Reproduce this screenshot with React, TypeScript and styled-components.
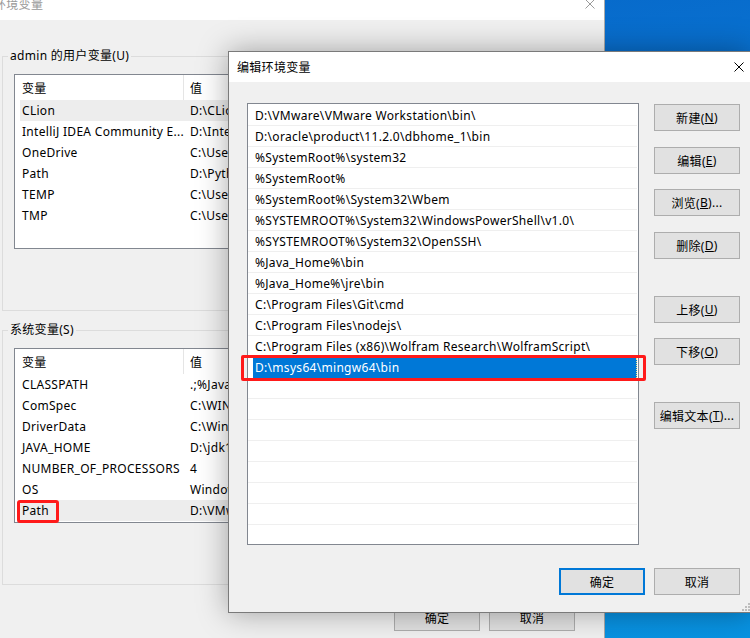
import styled, { createGlobalStyle } from "styled-components";

const GlobalStyle = createGlobalStyle`
  html, body {
    margin: 0;
    padding: 0;
  }
  body {
    font-family: "Noto Sans", "Noto Sans CJK SC", sans-serif;
    font-size: 12px;
    letter-spacing: 0.3px;
    color: #000000;
  }
  * {
    box-sizing: border-box;
  }
`;

const Desktop = styled.div`
  position: relative;
  width: 750px;
  height: 638px;
  overflow: hidden;
  background: linear-gradient(170deg, #0663c6 0%, #0a7ad6 40%, #0893e2 100%);
`;

// windows on the desktop are placed at their screen coordinates
const MainWindow = styled.div`
  position: absolute;
  left: -12px;
  top: -11px;
  width: 617px;
  height: 680px;
  display: flex;
  flex-direction: column;
  background: #f0f0f0;
  border: 1px solid #aaaaaa;
`;

const EditDialog = styled.div`
  position: absolute;
  left: 228px;
  top: 51px;
  width: 524px;
  height: 562px;
  display: flex;
  flex-direction: column;
  background: #f0f0f0;
  border: 1px solid #7a7a7a;
  box-shadow: 0 0 28px rgba(0, 0, 0, 0.34);
`;

const TitleBar = styled.div<{ $inactive?: boolean }>`
  height: 30px;
  flex: none;
  display: flex;
  align-items: center;
  justify-content: space-between;
  padding-left: ${(p) => (p.$inactive ? 5 : 8)}px;
  padding-bottom: ${(p) => (p.$inactive ? 3 : 0)}px;
  background: #ffffff;
  color: ${(p) => (p.$inactive ? "#999999" : "#000000")};
  font-size: 12px;
`;

const CloseBox = styled.div<{ $width: number }>`
  width: ${(p) => p.$width}px;
  height: 30px;
  display: flex;
  align-items: center;
  justify-content: center;
`;

const MainBody = styled.div`
  padding: 28px 13px 0 13px;
  display: flex;
  flex-direction: column;
`;

const GroupBox = styled.fieldset<{ $gap?: number }>`
  margin: ${(p) => p.$gap || 0}px 0 0 0;
  padding: 10px 11px 24px 11px;
  border: 1px solid #dcdcdc;
  min-width: 0;
`;

const Legend = styled.legend`
  padding: 0 2px;
  margin-left: -6px;
  line-height: 16px;
  font-size: 12px;
`;

const VarList = styled.div`
  height: 175px;
  background: #ffffff;
  border: 1px solid #828790;
`;

const ListHeader = styled.div`
  display: grid;
  grid-template-columns: 162px 1fr;
  height: 25px;
  padding-left: 7px;
`;

const HeaderCell = styled.div<{ $sep?: boolean }>`
  display: flex;
  align-items: center;
  padding-left: ${(p) => (p.$sep ? 0 : 6)}px;
  border-right: ${(p) => (p.$sep ? "1px solid #e5e5e5" : "none")};
`;

const VarRow = styled.div<{ $selected?: boolean }>`
  display: grid;
  grid-template-columns: 168px 1fr;
  height: 21px;
  align-items: center;
  margin-left: 5px;
  padding-left: 2px;
  white-space: nowrap;
  background: ${(p) => (p.$selected ? "#ededed" : "transparent")};
`;

const Cell = styled.div`
  position: relative;
  line-height: 21px;
`;

const RedMark = styled.div`
  position: absolute;
  left: -5px;
  top: 0;
  width: 42px;
  height: 23px;
  border: 3px solid #ff1a1a;
  border-radius: 3px;
`;

const HiddenActions = styled.div`
  display: flex;
  justify-content: flex-end;
  gap: 9px;
  margin-top: 10px;
`;

const Button = styled.div<{ $default?: boolean; $gap?: number }>`
  width: 86px;
  height: 27px;
  flex: none;
  margin-top: ${(p) => p.$gap || 0}px;
  display: flex;
  align-items: center;
  justify-content: center;
  background: #e1e1e1;
  border: ${(p) => (p.$default ? "2px solid #0078d7" : "1px solid #adadad")};
  font-size: 12px;
  white-space: nowrap;

  u {
    text-decoration: underline;
    text-underline-offset: 1px;
  }
`;

const FooterRow = styled.div<{ $gap: number; $right: number }>`
  display: flex;
  justify-content: flex-end;
  gap: 9px;
  margin-top: ${(p) => p.$gap}px;
  padding-right: ${(p) => p.$right}px;
`;

const DialogBody = styled.div`
  position: relative;
  flex: 1;
  padding: 21px 11px 17px 18px;
  display: flex;
  flex-direction: column;
`;

const TopArea = styled.div`
  display: flex;
  gap: 15px;
`;

const PathList = styled.div`
  width: 392px;
  height: 442px;
  flex: none;
  padding-top: 1px;
  background: #ffffff;
  border: 1px solid #828790;
`;

const PathRow = styled.div<{ $active?: boolean }>`
  position: relative;
  height: 21px;
  display: flex;
  align-items: center;
  padding-left: ${(p) => (p.$active ? 0 : 7)}px;
  margin-right: 1px;
  border-bottom: 1px solid ${(p) => (p.$active ? "transparent" : "#efefef")};
  white-space: nowrap;
`;

const EditBox = styled.div`
  flex: 1;
  height: 20px;
  margin: 1px 0 0 5px;
  padding-left: 2px;
  display: flex;
  align-items: center;
  background: #0078d7;
  color: #ffffff;
  border-right: 1px dotted #f5e08a;
`;

const RowMark = styled.div`
  position: absolute;
  left: -7px;
  top: -2px;
  width: 405px;
  height: 26px;
  border: 3px solid #ff1a1a;
  border-radius: 2px;
`;

const ButtonColumn = styled.div`
  display: flex;
  flex-direction: column;
`;

const Grip = styled.svg`
  position: absolute;
  right: 1px;
  bottom: 1px;
`;

const CloseIcon = ({ color }: { color: string }) => (
  <svg width="10" height="10" viewBox="0 0 10 10">
    <path d="M0.5 0.5 L9.5 9.5 M9.5 0.5 L0.5 9.5" stroke={color} strokeWidth="1" />
  </svg>
);

const userVars: [string, string][] = [
  ["CLion", "D:\\CLion 2019.3.3\\bin;"],
  ["IntelliJ IDEA Community E...", "D:\\IntelliJ IDEA Community Edition 2019.3.3\\bin;"],
  ["OneDrive", "C:\\Users\\admin\\OneDrive"],
  ["Path", "D:\\Python\\Python37\\Scripts\\;D:\\Python\\Python37\\"],
  ["TEMP", "C:\\Users\\admin\\AppData\\Local\\Temp"],
  ["TMP", "C:\\Users\\admin\\AppData\\Local\\Temp"],
];

const systemVars: [string, string][] = [
  ["CLASSPATH", ".;%Java_Home%\\bin;%Java_Home%\\lib\\dt.jar"],
  ["ComSpec", "C:\\WINDOWS\\system32\\cmd.exe"],
  ["DriverData", "C:\\Windows\\System32\\Drivers\\DriverData"],
  ["JAVA_HOME", "D:\\jdk1.8.0_221"],
  ["NUMBER_OF_PROCESSORS", "4"],
  ["OS", "Windows_NT"],
  ["Path", "D:\\VMware\\VMware Workstation\\bin\\;D:\\oracle"],
];

const paths = [
  "D:\\VMware\\VMware Workstation\\bin\\",
  "D:\\oracle\\product\\11.2.0\\dbhome_1\\bin",
  "%SystemRoot%\\system32",
  "%SystemRoot%",
  "%SystemRoot%\\System32\\Wbem",
  "%SYSTEMROOT%\\System32\\WindowsPowerShell\\v1.0\\",
  "%SYSTEMROOT%\\System32\\OpenSSH\\",
  "%Java_Home%\\bin",
  "%Java_Home%\\jre\\bin",
  "C:\\Program Files\\Git\\cmd",
  "C:\\Program Files\\nodejs\\",
  "C:\\Program Files (x86)\\Wolfram Research\\WolframScript\\",
  "D:\\msys64\\mingw64\\bin",
];

const sideButtons: { label: string; key: string; tail?: string; gap: number }[] = [
  { label: "新建", key: "N", gap: 1 },
  { label: "编辑", key: "E", gap: 16 },
  { label: "浏览", key: "B", tail: "...", gap: 15 },
  { label: "删除", key: "D", gap: 16 },
  { label: "上移", key: "U", gap: 37 },
  { label: "下移", key: "O", gap: 15 },
  { label: "编辑文本", key: "T", tail: "...", gap: 37 },
];

const VariableTable = ({ rows, marked }: { rows: [string, string][]; marked?: number }) => (
  <VarList>
    <ListHeader>
      <HeaderCell $sep>变量</HeaderCell>
      <HeaderCell>值</HeaderCell>
    </ListHeader>
    {rows.map(([name, value], i) => (
      <VarRow key={name + i} $selected={marked !== undefined ? i === marked : i === 0}>
        <Cell>
          {name}
          {i === marked && <RedMark />}
        </Cell>
        <Cell>{value}</Cell>
      </VarRow>
    ))}
  </VarList>
);

export default function App() {
  const rows = Array.from({ length: 20 }, (_, i) => paths[i] ?? "");
  const selected = paths.length - 1;

  return (
    <>
      <GlobalStyle />
      <Desktop>
        <MainWindow>
          <TitleBar $inactive>
            环境变量
            <CloseBox $width={28}>
              <CloseIcon color="#9a9a9a" />
            </CloseBox>
          </TitleBar>
          <MainBody>
            <GroupBox>
              <Legend>admin 的用户变量(U)</Legend>
              <VariableTable rows={userVars} />
              <HiddenActions>
                <Button>新建(<u>N</u>)...</Button>
                <Button>编辑(<u>E</u>)...</Button>
                <Button>删除(<u>D</u>)</Button>
              </HiddenActions>
            </GroupBox>
            <GroupBox $gap={11}>
              <Legend>系统变量(S)</Legend>
              <VariableTable rows={systemVars} marked={6} />
              <HiddenActions>
                <Button>新建(<u>W</u>)...</Button>
                <Button>编辑(<u>I</u>)...</Button>
                <Button>删除(<u>L</u>)</Button>
              </HiddenActions>
            </GroupBox>
            <FooterRow $gap={19} $right={16}>
              <Button>确定</Button>
              <Button>取消</Button>
            </FooterRow>
          </MainBody>
        </MainWindow>

        <EditDialog>
          <TitleBar>
            编辑环境变量
            <CloseBox $width={24}>
              <CloseIcon color="#000000" />
            </CloseBox>
          </TitleBar>
          <DialogBody>
            <TopArea>
              <PathList>
                {rows.map((p, i) =>
                  i === selected ? (
                    <PathRow key={i} $active>
                      <EditBox>{p}</EditBox>
                      <RowMark />
                    </PathRow>
                  ) : (
                    <PathRow key={i}>{p}</PathRow>
                  )
                )}
              </PathList>
              <ButtonColumn>
                {sideButtons.map((b) => (
                  <Button key={b.label} $gap={b.gap}>
                    {b.label}(<u>{b.key}</u>){b.tail}
                  </Button>
                ))}
              </ButtonColumn>
            </TopArea>
            <FooterRow $gap={23} $right={0}>
              <Button $default>确定</Button>
              <Button>取消</Button>
            </FooterRow>
            <Grip width="8" height="8" viewBox="0 0 8 8">
              <rect x="6" y="0" width="2" height="2" fill="#bdbdbd" />
              <rect x="3" y="3" width="2" height="2" fill="#bdbdbd" />
              <rect x="6" y="3" width="2" height="2" fill="#bdbdbd" />
              <rect x="0" y="6" width="2" height="2" fill="#bdbdbd" />
              <rect x="3" y="6" width="2" height="2" fill="#bdbdbd" />
              <rect x="6" y="6" width="2" height="2" fill="#bdbdbd" />
            </Grip>
          </DialogBody>
        </EditDialog>
      </Desktop>
    </>
  );
}
